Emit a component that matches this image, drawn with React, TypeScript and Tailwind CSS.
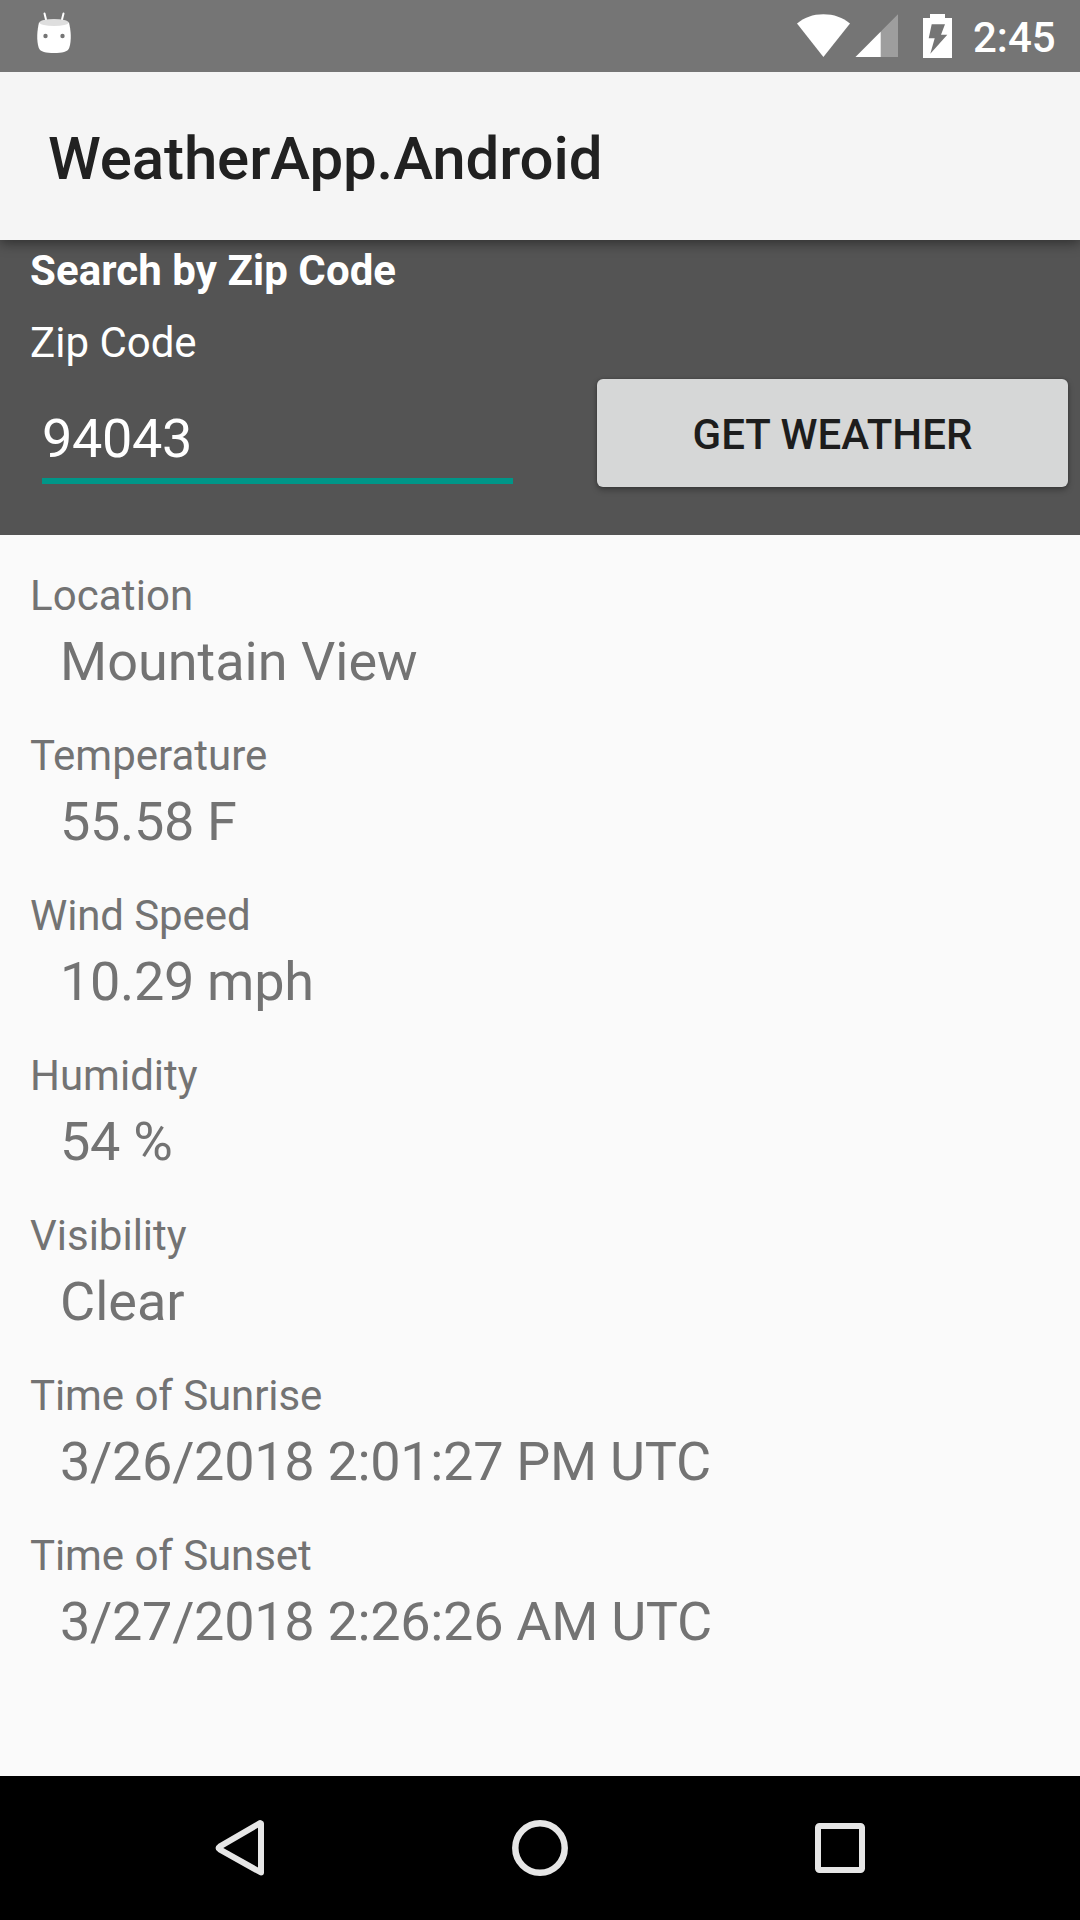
const readings = [
  { label: "Location", value: "Mountain View", labelTracking: "tracking-[0.1px]", valueTracking: "tracking-normal" },
  { label: "Temperature", value: "55.58 F", labelTracking: "tracking-normal", valueTracking: "tracking-[-0.32px]" },
  { label: "Wind Speed", value: "10.29 mph", labelTracking: "tracking-[-0.1px]", valueTracking: "tracking-[-0.32px]" },
  { label: "Humidity", value: "54 %", labelTracking: "tracking-normal", valueTracking: "tracking-[-0.32px]" },
  { label: "Visibility", value: "Clear", labelTracking: "tracking-normal", valueTracking: "tracking-normal" },
  { label: "Time of Sunrise", value: "3/26/2018 2:01:27 PM UTC", labelTracking: "tracking-[-0.08px]", valueTracking: "tracking-[-0.3px]" },
  { label: "Time of Sunset", value: "3/27/2018 2:26:26 AM UTC", labelTracking: "tracking-[-0.08px]", valueTracking: "tracking-[-0.3px]" },
];

function StatusBar() {
  return (
    <div className="relative z-10 flex h-[72px] items-start justify-between bg-[#757575] pr-[24px] pl-[36px] text-white">
      <svg className="mt-3 h-[42px] w-[36px]" viewBox="36 12 36 42" fill="none">
        <path d="M44.5 13.5L46.5 21.5M63.5 13.5L61.5 21.5" stroke="#fff" strokeWidth="2" strokeLinecap="round" />
        <path d="M39 22.5C37.2 30 36.2 40 38.8 48C40.2 52 46 53 54 53S67.800 52 69.200 48C71.800 40 70.800 30 69 22.500Z" fill="#fff" />
        <ellipse cx="54" cy="22.500" rx="14.500" ry="3.600" fill="#dedede" />
        <circle cx="45.500" cy="36" r="2.200" fill="#757575" />
        <circle cx="62.500" cy="36" r="2.200" fill="#757575" />
      </svg>
      <div className="flex items-start">
        <svg className="mt-3 h-[48px] w-[160px]" viewBox="796 12 160 48">
          <path d="M823.4 57L797 23.600C804 17.500 813 14.200 823.400 14.200S843 17.500 850 23.600Z" fill="#fff" />
          <path d="M855.500 57L898 14.300V57Z" fill="#fff" fillOpacity=".3" />
          <path d="M855.500 57L880.700 31.700V57Z" fill="#fff" />
          <path
            fillRule="evenodd"
            d="M930 14H945V18H952V58H923V18H930ZM931.700 24.300L928.700 38.300H934.700L930.300 53.700L947.300 34.700H941L945 24.300Z"
            fill="#fff"
          />
        </svg>
        <span className="mt-[13px] ml-[17px] w-[83px] text-[42px] leading-[50px] font-medium whitespace-nowrap">2:45</span>
      </div>
    </div>
  );
}

function SearchPanel() {
  return (
    <section className="h-[295px] bg-[#545454] text-white">
      <h2 className="ml-[30px] pt-[6px] text-[42px] leading-[50px] font-bold tracking-[0.06px]">Search by Zip Code</h2>
      <label htmlFor="zip" className="mt-[22px] ml-[30px] block text-[42px] leading-[50px]">
        Zip Code
      </label>
      <div className="flex items-start justify-between pr-[12px] pl-[42px]">
        <input
          id="zip"
          defaultValue="94043"
          className="mt-[39px] h-[77px] w-[471px] border-b-6 border-[#009688] bg-transparent pb-[9px] text-[54px] leading-[62px] tracking-[-0.33px] outline-none"
        />
        <button className="mt-[11px] h-[108px] w-[471px] rounded-[6px] bg-[#d6d7d7] pt-[2px] text-[42px] font-medium tracking-[0.06px] text-[#1d1d1d] shadow-[0_3px_6px_rgba(0,0,0,0.3),0_0_3px_rgba(0,0,0,0.2)]">
          GET WEATHER
        </button>
      </div>
    </section>
  );
}

function NavigationBar() {
  return (
    <nav className="flex h-[144px] items-center justify-between bg-black px-[204px]">
      <svg className="h-[72px] w-[72px]" viewBox="0 0 72 72" fill="none" stroke="#e6e6e6" strokeWidth="6" strokeLinejoin="round">
        <path d="M57 11.500V60.500L15.600 37.300Q13.500 36 15.600 34.700L56 11.100Z" />
      </svg>
      <svg className="h-[72px] w-[72px]" viewBox="0 0 72 72" fill="none" stroke="#e6e6e6" strokeWidth="6.500">
        <circle cx="36" cy="36" r="24.700" />
      </svg>
      <svg className="h-[72px] w-[72px]" viewBox="0 0 72 72" fill="none" stroke="#e6e6e6" strokeWidth="6">
        <rect x="14" y="14" width="44" height="44" rx="1.500" />
      </svg>
    </nav>
  );
}

export default function App() {
  return (
    <div className="flex h-[1920px] w-[1080px] flex-col overflow-hidden bg-[#fafafa] font-[Roboto,sans-serif]">
      <StatusBar />
      <header className="relative flex h-[168px] items-center bg-[#f5f5f5] pt-[5px] pl-[48px] shadow-[0_3px_12px_rgba(0,0,0,0.45)]">
        <h1 className="text-[60px] leading-[70px] font-medium tracking-[-0.12px] text-[#212121]">WeatherApp.Android</h1>
      </header>
      <SearchPanel />
      <main className="flex flex-1 flex-col gap-[37px] pt-[36px]">
        {readings.map((reading) => (
          <div key={reading.label} className="text-[#737373]">
            <div className={`ml-[30px] text-[42px] leading-[50px] ${reading.labelTracking}`}>{reading.label}</div>
            <div className={`mt-[9px] ml-[60px] text-[54px] leading-[64px] ${reading.valueTracking}`}>{reading.value}</div>
          </div>
        ))}
      </main>
      <NavigationBar />
    </div>
  );
}
